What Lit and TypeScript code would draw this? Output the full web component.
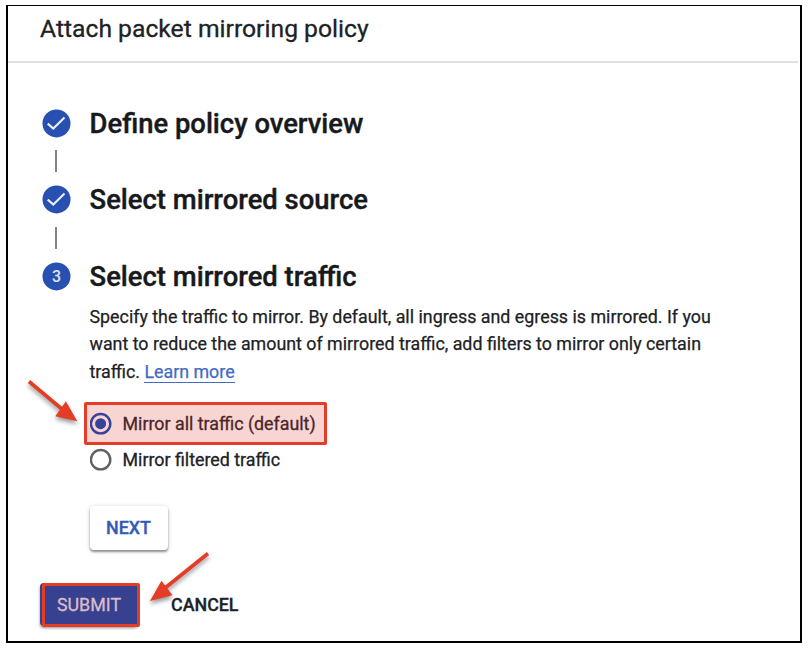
import { LitElement, html, svg, css, nothing } from "lit";
import { customElement, property } from "lit/decorators.js";

@customElement("step-badge")
class StepBadge extends LitElement {
  @property() label = "";

  static styles = css`
    :host { display: block; width: 29px; height: 29px; flex: none; }
    svg { display: block; }
    text { font: 500 16px Roboto, sans-serif; fill: #dfe6f6; }
  `;

  render() {
    return html`<svg width="29" height="29" viewBox="-0.5 -0.4 29 29">
      <circle cx="14" cy="14" r="14" fill="#2850b0" />
      ${this.label
        ? svg`<text x="14" y="19.4" text-anchor="middle">${this.label}</text>`
        : svg`<path d="M5.2 14.2 L10.8 19.2 L22 8.1" fill="none" stroke="#e9effb" stroke-width="2.1" />`}
    </svg>`;
  }
}

@customElement("radio-option")
class RadioOption extends LitElement {
  @property({ type: Boolean }) checked = false;

  static styles = css`
    :host { display: flex; align-items: center; height: 36px; gap: 10px; font-size: 17.84px; color: #202124; -webkit-text-stroke: 0.3px; }
    svg { display: block; flex: none; }
    .on { stroke: #0845b7; fill: none; }
    .off { stroke: #616161; fill: none; }
    .dot { fill: #0845b7; }
  `;

  render() {
    return html`<svg width="23" height="24" viewBox="0 0 23 24">
        <circle class=${this.checked ? "on" : "off"} cx="10.6" cy="12.7" r="9.7" stroke-width="2.4" />
        ${this.checked ? svg`<circle class="dot" cx="10.6" cy="12.7" r="5.5" />` : nothing}
      </svg><span><slot></slot></span>`;
  }
}

@customElement("app-root")
class AppRoot extends LitElement {
  static styles = css`
    :host { display: block; width: 808px; height: 652px; overflow: hidden; position: relative; background: #fff; font-family: Roboto, sans-serif; color: #202124; }
    .frame { box-sizing: border-box; width: 796px; height: 638px; margin: 5px 0 0 6px; border: solid #000; border-width: 1px 2px 2px; }
    .title { box-sizing: border-box; height: 57px; width: 790px; padding: 7px 0 0 32px; border-bottom: 2px solid #e0e0e0; font-size: 24.7px; line-height: 32px; white-space: nowrap; -webkit-text-stroke: 0.3px; }
    .content { padding: 46px 0 0 34px; }
    .step { display: flex; align-items: center; height: 28px; gap: 18.6px; }
    h2 { margin: 0; padding-top: 1.4px; font-size: 27.42px; font-weight: 500; line-height: 28px; white-space: nowrap; color: #18191b; -webkit-text-stroke: 0.4px; }
    .link { width: 1.5px; height: 22px; margin: 13.3px 0 13.3px 13px; background: #828282; }
    .details { padding: 13px 0 0 47.5px; }
    p { margin: 0; font-size: 17.83px; line-height: 27.3px; white-space: nowrap; -webkit-text-stroke: 0.25px; }
    a { color: #426bc5; border-bottom: 1.5px solid #426bc5; }
    .choices { padding-top: 20px; }
    .mark { position: absolute; box-sizing: border-box; border: 3.5px solid #e33c27; border-radius: 2px; background: rgba(222, 58, 50, 0.22); }
    .mark.choice { left: 84px; top: 402px; width: 243px; height: 43px; }
    .mark.submit-mark { left: 42px; top: 583px; width: 98px; height: 43.5px; background: transparent; }
    .button { box-sizing: border-box; height: 43px; border-radius: 4px; font-size: 17.85px; font-weight: 500; line-height: 43px; text-align: center; }
    .next { width: 78px; height: 44px; margin-top: 29px; color: #325ab8; box-shadow: 0 2px 2px rgba(0,0,0,.35), 0 1px 5px rgba(0,0,0,.2); -webkit-text-stroke: 0.3px; }
    .actions { display: flex; margin: 33px 0 0 -2px; }
    .submit { width: 98px; background: #37418f; color: #dcbccb; font-weight: 400; box-shadow: 0 2px 3px rgba(0,0,0,.45); -webkit-text-stroke: 0.3px; }
    .cancel { margin-left: 33px; -webkit-text-stroke: 0.3px; }
    .arrows { position: absolute; left: 0; top: 0; pointer-events: none; filter: drop-shadow(0 3px 2px rgba(0,0,0,.4)); }
  `;

  render() {
    return html`
      <main class="frame">
        <div class="title">Attach packet mirroring policy</div>
        <div class="content">
          <div class="step"><step-badge></step-badge><h2>Define policy overview</h2></div>
          <div class="link"></div>
          <div class="step"><step-badge></step-badge><h2>Select mirrored source</h2></div>
          <div class="link"></div>
          <div class="step"><step-badge label="3"></step-badge><h2>Select mirrored traffic</h2></div>
          <div class="details">
            <p>Specify the traffic to mirror. By default, all ingress and egress is mirrored. If you<br />want to reduce the amount of mirrored traffic, add filters to mirror only certain<br />traffic. <a>Learn more</a></p>
            <div class="choices">
              <radio-option checked>Mirror all traffic (default)</radio-option>
              <radio-option>Mirror filtered traffic</radio-option>
            </div>
            <div class="button next">NEXT</div>
          </div>
          <div class="actions">
            <div class="button submit">SUBMIT</div>
            <div class="button cancel">CANCEL</div>
          </div>
        </div>
      </main>
      <div class="mark choice"></div>
      <div class="mark submit-mark"></div>
      <svg class="arrows" width="808" height="652" viewBox="0 0 808 652">
        <g fill="#e33c27" stroke="#e33c27">
          <path d="M29 381.5 L63 410" stroke-width="3.6" />
          <path d="M77.3 421.3 L55.3 416.3 L65.9 401.2 Z" stroke="none" />
          <path d="M208 553.5 L165 588" stroke-width="3.6" />
          <path d="M150 601 L161.5 580.7 L172.5 595.3 Z" stroke="none" />
        </g>
      </svg>
    `;
  }
}
